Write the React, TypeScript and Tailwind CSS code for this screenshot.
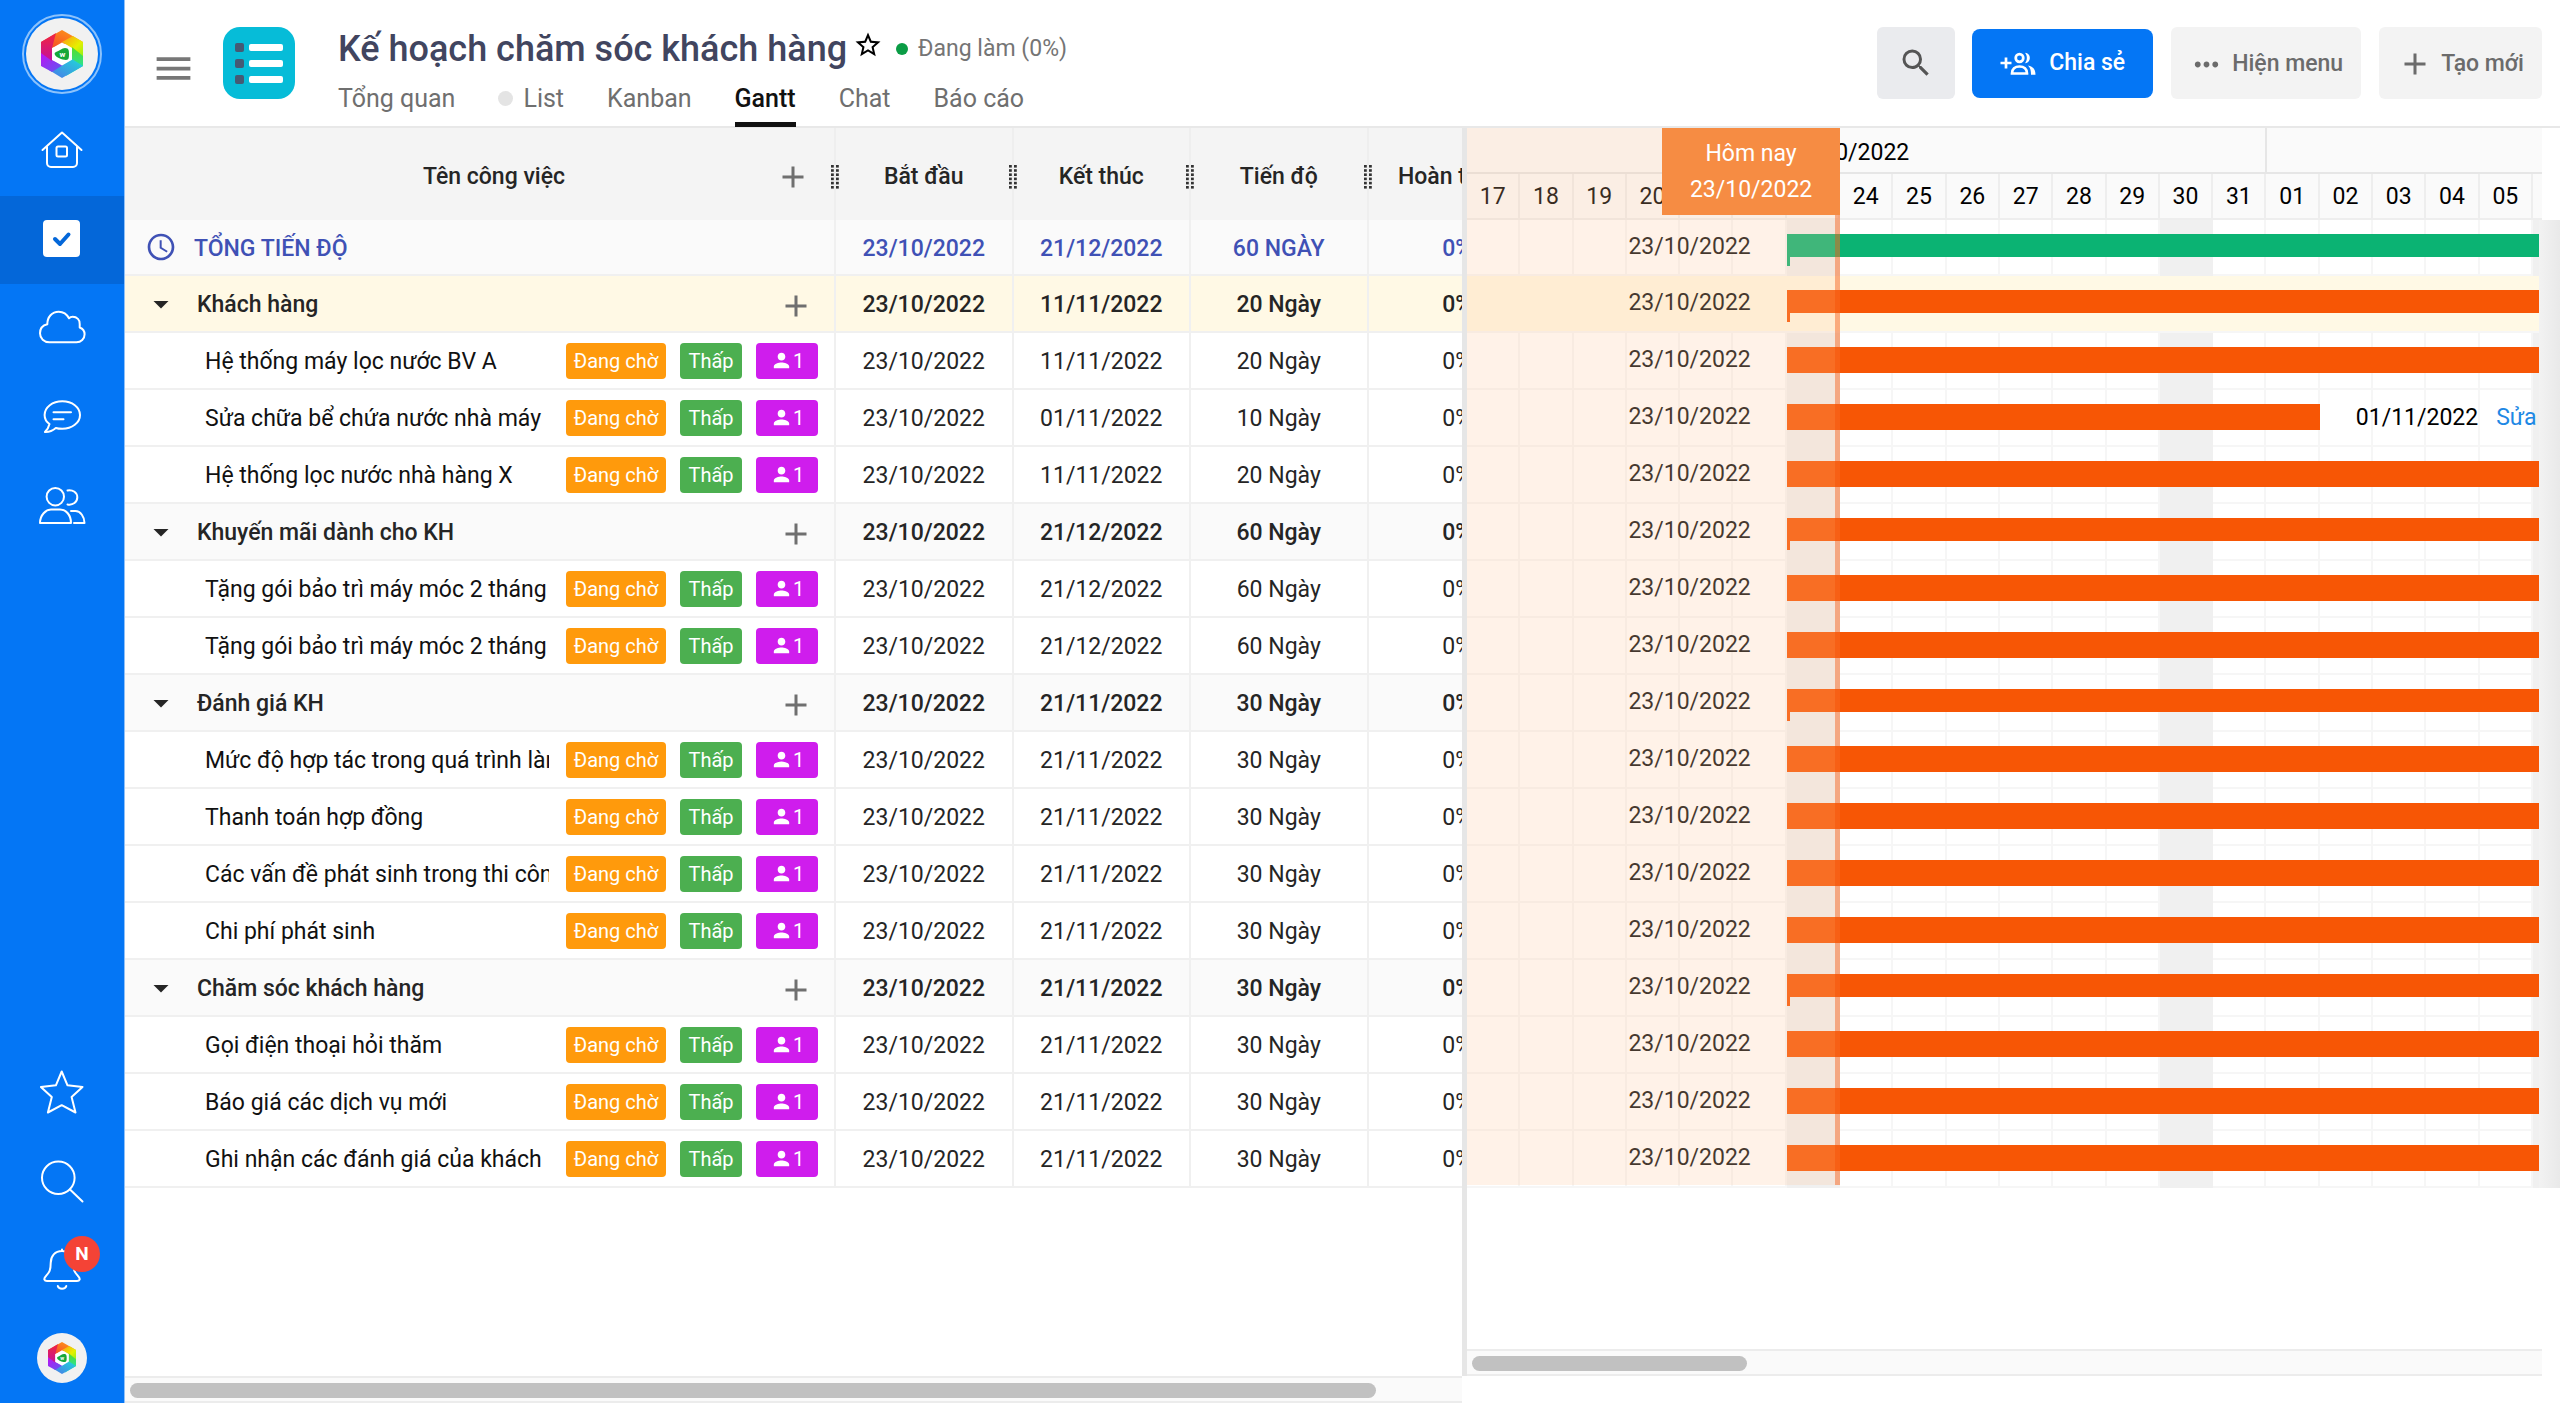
import type { ReactNode } from 'react';
import clsx from 'clsx';
import {
  MdAccessTime,
  MdAdd,
  MdArrowDropDown,
  MdMenu,
  MdMoreHoriz,
  MdPerson,
  MdSearch,
  MdStarBorder,
} from 'react-icons/md';

type RowKind = 'total' | 'group' | 'task';

interface Row {
  kind: RowKind;
  name: string;
  end: string;
  duration: string;
  active?: boolean;
  short?: boolean;
}

const START = '23/10/2022';

const rows: Row[] = [
  { kind: 'total', name: 'TỔNG TIẾN ĐỘ', end: '21/12/2022', duration: '60 NGÀY' },
  { kind: 'group', name: 'Khách hàng', end: '11/11/2022', duration: '20 Ngày', active: true },
  { kind: 'task', name: 'Hệ thống máy lọc nước BV A', end: '11/11/2022', duration: '20 Ngày' },
  { kind: 'task', name: 'Sửa chữa bể chứa nước nhà máy', end: '01/11/2022', duration: '10 Ngày', short: true },
  { kind: 'task', name: 'Hệ thống lọc nước nhà hàng X', end: '11/11/2022', duration: '20 Ngày' },
  { kind: 'group', name: 'Khuyến mãi dành cho KH', end: '21/12/2022', duration: '60 Ngày' },
  { kind: 'task', name: 'Tặng gói bảo trì máy móc 2 tháng', end: '21/12/2022', duration: '60 Ngày' },
  { kind: 'task', name: 'Tặng gói bảo trì máy móc 2 tháng', end: '21/12/2022', duration: '60 Ngày' },
  { kind: 'group', name: 'Đánh giá KH', end: '21/11/2022', duration: '30 Ngày' },
  { kind: 'task', name: 'Mức độ hợp tác trong quá trình làm việc', end: '21/11/2022', duration: '30 Ngày' },
  { kind: 'task', name: 'Thanh toán hợp đồng', end: '21/11/2022', duration: '30 Ngày' },
  { kind: 'task', name: 'Các vấn đề phát sinh trong thi công', end: '21/11/2022', duration: '30 Ngày' },
  { kind: 'task', name: 'Chi phí phát sinh', end: '21/11/2022', duration: '30 Ngày' },
  { kind: 'group', name: 'Chăm sóc khách hàng', end: '21/11/2022', duration: '30 Ngày' },
  { kind: 'task', name: 'Gọi điện thoại hỏi thăm', end: '21/11/2022', duration: '30 Ngày' },
  { kind: 'task', name: 'Báo giá các dịch vụ mới', end: '21/11/2022', duration: '30 Ngày' },
  { kind: 'task', name: 'Ghi nhận các đánh giá của khách', end: '21/11/2022', duration: '30 Ngày' },
];

const days = [
  '17', '18', '19', '20', '21', '22', '23', '24', '25', '26',
  '27', '28', '29', '30', '31', '01', '02', '03', '04', '05',
];

// Sundays, by column index (the last one is the column cut off at the right edge)
const sundays = [6, 13, 20];

const headerGrid = 'grid grid-cols-[repeat(20,minmax(0,1fr))_9px]';
const bodyGrid = 'grid grid-cols-[repeat(20,minmax(0,1fr))_6px_21px]';

/* ---------- Sidebar ---------- */

function Logo({ className }: { className: string }) {
  return (
    <svg viewBox="0 0 44 48" className={className} aria-hidden="true">
      <defs>
        <linearGradient id="seg-a" x1="0" y1="1" x2="1" y2="0">
          <stop offset="0" stopColor="#f4402c" />
          <stop offset="1" stopColor="#ffa114" />
        </linearGradient>
        <linearGradient id="seg-b" x1="0" y1="0" x2="1" y2="1">
          <stop offset="0" stopColor="#ff9a12" />
          <stop offset="0.6" stopColor="#e6f000" />
          <stop offset="1" stopColor="#8df01a" />
        </linearGradient>
        <linearGradient id="seg-c" x1="0" y1="0" x2="0" y2="1">
          <stop offset="0" stopColor="#58dc28" />
          <stop offset="1" stopColor="#14e6c8" />
        </linearGradient>
        <linearGradient id="seg-d" x1="1" y1="0" x2="0" y2="1">
          <stop offset="0" stopColor="#1fd8d8" />
          <stop offset="1" stopColor="#4a78ea" />
        </linearGradient>
        <linearGradient id="seg-e" x1="1" y1="1" x2="0" y2="0">
          <stop offset="0" stopColor="#5a5cf0" />
          <stop offset="1" stopColor="#c010f4" />
        </linearGradient>
        <linearGradient id="seg-f" x1="0" y1="1" x2="0" y2="0">
          <stop offset="0" stopColor="#c4109c" />
          <stop offset="1" stopColor="#f2263a" />
        </linearGradient>
      </defs>
      <path d="M1 12 22 0 43 12 22 14 12 18Z" fill="url(#seg-a)" />
      <path d="M22 12 33 6 43 12V27L32 18Z" fill="url(#seg-b)" />
      <path d="M32 17 43 26V36L26 46 32 30Z" fill="url(#seg-c)" />
      <path d="M43 36 22 48 9 40 22 35 32 29Z" fill="url(#seg-d)" />
      <path d="M23 35 12 42 1 36V22L12 30Z" fill="url(#seg-e)" />
      <path d="M12 31 1 23V12L16 3 12 18Z" fill="url(#seg-f)" />
      <path d="M22 12.500 32 18.300V29.700L22 35.500 12 29.700V18.300Z" fill="#fff" />
      <path d="M16 22c3-1 6-4 9-4 4 0 4 3 4 6s0 6-3 6c-4 0-10-3-11-5s0-2.500 1-3Z" fill="#17a83a" />
      <text x="22.500" y="27" textAnchor="middle" fontSize="8" fontWeight="700" fill="#fff">
        w
      </text>
    </svg>
  );
}

function LineIcon({ children }: { children: ReactNode }) {
  return (
    <svg
      viewBox="0 0 48 48"
      className="size-12"
      fill="none"
      stroke="currentColor"
      strokeWidth="2"
      strokeLinecap="round"
      strokeLinejoin="round"
      aria-hidden="true"
    >
      {children}
    </svg>
  );
}

function NavItem({ label, active, children }: { label: string; active?: boolean; children: ReactNode }) {
  return (
    <a
      href="#"
      aria-label={label}
      className={clsx('flex h-[88px] w-full items-center justify-center', active && 'bg-[#0467d9]')}
    >
      {children}
    </a>
  );
}

function Sidebar() {
  return (
    <nav className="flex w-[125px] shrink-0 flex-col border-r border-[#8fc0f8] bg-[#0476f5] text-white">
      <a href="#" aria-label="Logo" className="flex h-[108px] items-center justify-center">
        <span className="flex size-20 items-center justify-center rounded-full border-2 border-[#8cc2fb]">
          <span className="flex size-[72px] items-center justify-center rounded-full bg-[#f1f1f1]">
            <Logo className="h-12 w-11" />
          </span>
        </span>
      </a>
      <NavItem label="Trang chủ">
        <LineIcon>
          <path d="M4.500 22 24 4.500 43.500 22" />
          <path d="M9 19V35a4 4 0 0 0 4 4H35a4 4 0 0 0 4-4V19" />
          <rect x="18.500" y="18.500" width="10.500" height="10" rx="1.500" />
        </LineIcon>
      </NavItem>
      <NavItem label="Công việc" active>
        <LineIcon>
          <rect x="6" y="5" width="35" height="35" rx="3" fill="#fff" />
          <path d="M17 23 22 28 30.500 18.500" stroke="#0467d9" strokeWidth="4" />
        </LineIcon>
      </NavItem>
      <NavItem label="Tài liệu">
        <LineIcon>
          <path d="M11.500 38.300C6 38.300 2 34.500 2 29.300 2 24.500 5 21.300 9.300 20.300 9.300 13 14 7.700 20.700 7.700c4.600 0 8.300 2.600 10.300 6.600 1-1.100 2.300-1.500 3.700-1.500 4.300 0 7.300 3.200 7 7.200v3.500c3.100 1.200 4.900 3.700 4.900 6.800 0 4.700-3.600 8-8.100 8Z" />
        </LineIcon>
      </NavItem>
      <NavItem label="Trò chuyện">
        <LineIcon>
          <path d="M11.500 32C8.300 29.800 6.600 26.600 6.600 23 6.600 15.200 14.500 9.200 24.300 9.200S42 15.200 42 23 34 36.800 24.300 36.800c-2.300 0-4.500-.2-6.500-.8-2.800 2.500-6.800 4.200-10.900 4C9.300 37.800 10.800 35 11.500 32Z" />
          <path d="M15.500 20.300H33M15.500 27.300H25.500" />
        </LineIcon>
      </NavItem>
      <NavItem label="Thành viên">
        <LineIcon>
          <circle cx="17.300" cy="16.700" r="8.700" />
          <path d="M2 43C2 35 8 29.500 13 29.500h9C28 29.500 33 35 33 43Z" />
          <path d="M29.500 10.400C35 9.500 39.300 12.500 39.300 17.300S35 25.500 29.500 24.500" />
          <path d="M33 31h4.500c5 0 9 6 9 12H36" />
        </LineIcon>
      </NavItem>
      <div className="mt-auto flex flex-col">
        <NavItem label="Yêu thích">
          <LineIcon>
            <path d="M23.700 2.500 29.500 16.300 44.500 18 33.600 28 37.500 43.500 23.700 36.200 9.900 43.500 13.800 28 2.900 18 17.900 16.300Z" />
          </LineIcon>
        </NavItem>
        <NavItem label="Tìm kiếm">
          <LineIcon>
            <circle cx="20.300" cy="20.700" r="16.300" />
            <path d="M32 32.500 44.500 44.500" />
          </LineIcon>
        </NavItem>
        <NavItem label="Thông báo">
          <span className="relative">
            <LineIcon>
              <path d="M24 6C17 6 12.700 11 12.700 18c0 8-1.700 9.500-4.700 13-3 3-1.500 5 1 5h30c2.500 0 4-2 1-5-3-3.500-4.700-5-4.700-13C35.300 11 31 6 24 6ZM24 6V4.500" />
              <path d="M19.800 41c.9 3.500 7.600 3.500 8.500 0" />
            </LineIcon>
            <span className="absolute -top-[9px] left-[26px] flex size-9 items-center justify-center rounded-full bg-[#f44336] text-[19px] font-bold">
              N
            </span>
          </span>
        </NavItem>
        <a href="#" aria-label="Tài khoản" className="flex h-[90px] items-center justify-center">
          <span className="flex size-[50px] items-center justify-center rounded-full bg-[#f1f1f1]">
            <Logo className="h-8 w-[30px]" />
          </span>
        </a>
      </div>
    </nav>
  );
}

/* ---------- Header ---------- */

function ProjectIcon() {
  return (
    <svg viewBox="0 0 72 72" className="size-[72px] shrink-0" aria-hidden="true">
      <rect width="72" height="72" rx="17" fill="#06bcd8" />
      {[16, 32, 48].map((y) => (
        <g key={y}>
          <rect x="12" y={y} width="9" height="9" rx="2" fill="#455a74" />
          <rect x="26" y={y + 1} width="34" height="7" rx="2" fill="#fff" />
        </g>
      ))}
    </svg>
  );
}

function ShareIcon() {
  return (
    <svg
      viewBox="0 0 36 26"
      className="h-[26px] w-9"
      fill="none"
      stroke="currentColor"
      strokeWidth="2.700"
      aria-hidden="true"
    >
      <path d="M.5 12H11.500M6 6.500V17.500" />
      <circle cx="19.500" cy="7" r="3.800" />
      <path d="M12 22.500C12 18 15 15.500 19.500 15.500S27 18 27 22.500Z" />
      <path d="M25 1.800C31.500 1.800 31.500 12.200 25 12.200 27.500 9 27.500 5 25 1.800Z" fill="currentColor" stroke="none" />
      <path d="M28 14.500C33 15.500 35.500 18.500 35.500 23.800H31C31 19.500 30.500 17 28 14.500Z" fill="currentColor" stroke="none" />
    </svg>
  );
}

const tabs = ['Tổng quan', 'List', 'Kanban', 'Gantt', 'Chat', 'Báo cáo'];

function Header() {
  return (
    <header className="flex h-32 shrink-0 border-b-2 border-[#e8e8e8] bg-white pr-[18px] pl-[26px]">
      <button type="button" aria-label="Menu" className="mt-[46px] size-[45px] shrink-0 text-[#777]">
        <MdMenu className="size-full" />
      </button>
      <div className="mt-[27px] ml-[27px]">
        <ProjectIcon />
      </div>
      <div className="mt-[27px] ml-[43px]">
        <div className="flex h-11 items-center">
          <h1 className="text-[36px] font-medium text-[#41455f]">Kế hoạch chăm sóc khách hàng</h1>
          <button type="button" aria-label="Yêu thích" className="mb-2 ml-[6px] text-black">
            <MdStarBorder className="size-[30px]" />
          </button>
          <span className="ml-[13px] size-3 rounded-full bg-[#0a9c45]" />
          <span className="ml-[10px] text-[23px] text-[#757575]">Đang làm (0%)</span>
        </div>
        <div className="mt-3 flex h-11 gap-[43px] text-[25px] leading-8 text-[#6f6f6f]">
          {tabs.map((tab) => (
            <a
              key={tab}
              href="#"
              className={clsx(
                'flex gap-[10px]',
                tab === 'Gantt' && 'border-b-[5px] border-[#111] font-medium text-[#111]',
              )}
            >
              {tab === 'List' && <span className="mt-2 size-[15px] rounded-full bg-[#e4e4e4]" />}
              {tab}
            </a>
          ))}
        </div>
      </div>
      <div className="mt-[27px] ml-auto flex items-start text-[23px] font-medium text-[#6b6b6b]">
        <button
          type="button"
          aria-label="Tìm kiếm"
          className="flex h-[72px] w-[78px] items-center justify-center rounded-md bg-[#eaebee] text-[#555]"
        >
          <MdSearch className="size-9" />
        </button>
        <button
          type="button"
          className="mt-[2px] ml-[17px] flex h-[69px] items-center gap-[13px] rounded-lg bg-[#0476f5] px-[28px] text-white"
        >
          <ShareIcon />
          Chia sẻ
        </button>
        <button
          type="button"
          className="ml-[18px] flex h-[72px] items-center gap-2 rounded-md bg-[#f3f3f3] px-[18px] pt-[2px]"
        >
          <MdMoreHoriz className="size-[35px]" />
          Hiện menu
        </button>
        <button
          type="button"
          className="ml-[18px] flex h-[72px] items-center gap-2 rounded-md bg-[#f3f3f3] px-[18px] pt-[2px]"
        >
          <MdAdd className="size-9" />
          Tạo mới
        </button>
      </div>
    </header>
  );
}

/* ---------- Task table ---------- */

function DragHandle() {
  return (
    <svg
      viewBox="0 0 10 26"
      className="absolute top-9 -right-[6px] z-10 h-[26px] w-[10px]"
      fill="#333"
      aria-hidden="true"
    >
      {[1, 5.2, 9.400, 13.600, 17.800, 22].map((y) => (
        <g key={y}>
          <rect x="1" y={y} width="2.800" height="2.600" />
          <rect x="6" y={y} width="2.800" height="2.600" />
        </g>
      ))}
    </svg>
  );
}

function NameCell({ row }: { row: Row }) {
  if (row.kind === 'task') {
    return (
      <div className="flex items-center gap-[14px] pr-4 pl-20 text-[#111]">
        <span className="mt-[3px] mr-[3px] flex-1 overflow-hidden whitespace-nowrap">{row.name}</span>
        <span className="flex h-9 w-[100px] items-center justify-center rounded bg-[#ff9a0c] text-xl text-white">
          Đang chờ
        </span>
        <span className="flex h-9 w-[62px] items-center justify-center rounded bg-[#4caf50] text-xl text-white">
          Thấp
        </span>
        <span className="flex h-9 w-[62px] items-center justify-center rounded bg-[#cf1ded] text-xl text-white">
          <MdPerson className="mb-px size-[23px]" />1
        </span>
      </div>
    );
  }
  return (
    <div className="flex items-center gap-4 pr-5 pl-5">
      <span className="flex w-8 justify-center">
        {row.kind === 'total' ? (
          <MdAccessTime className="size-8 shrink-0" />
        ) : (
          <MdArrowDropDown className="size-9 shrink-0" />
        )}
      </span>
      <span className={clsx('mt-[3px] flex-1', row.kind === 'group' ? 'pl-1' : 'pl-px')}>{row.name}</span>
      {row.kind === 'group' && (
        <button type="button" aria-label="Thêm công việc" className="mt-1 text-[#6f6f6f]">
          <MdAdd className="size-9" />
        </button>
      )}
    </div>
  );
}

function TaskTable() {
  return (
    <div className="flex w-[1337px] shrink-0 flex-col overflow-hidden">
      <table className="w-[1421px] table-fixed border-separate border-spacing-0 text-center text-[23px] leading-8 text-[#252525]">
        <colgroup>
          <col className="w-[711px]" />
          <col />
          <col />
          <col />
          <col />
        </colgroup>
        <thead>
          <tr className="bg-[#f4f4f4]">
            <th className="relative h-[92px] border-r-2 border-[#eee] pt-[5px] font-medium">
              <div className="flex items-center pr-[23px] pl-[88px]">
                <span className="flex-1">Tên công việc</span>
                <button type="button" aria-label="Thêm cột" className="text-[#6f6f6f]">
                  <MdAdd className="size-9" />
                </button>
              </div>
              <DragHandle />
            </th>
            {['Bắt đầu', 'Kết thúc', 'Tiến độ'].map((title) => (
              <th key={title} className="relative border-r-2 border-[#eee] pt-[5px] font-medium">
                {title}
                <DragHandle />
              </th>
            ))}
            <th className="pt-[5px] font-medium">Hoàn thành</th>
          </tr>
        </thead>
        <tbody>
          {rows.map((row, index) => (
            <tr
              key={index}
              className={clsx(
                row.kind === 'total' && 'h-14 bg-[#fafafa] font-medium text-[#3f51b5]',
                row.kind === 'group' && 'h-[57px] font-medium',
                row.kind === 'group' && (row.active ? 'bg-[#fff9e5]' : 'bg-[#fafafa]'),
                row.kind === 'task' && 'h-[57px]',
              )}
            >
              <td className="border-r-2 border-b-2 border-[#f0f0f0] text-left">
                <NameCell row={row} />
              </td>
              <td className="border-r-2 border-b-2 border-[#f0f0f0] pt-[3px]">{START}</td>
              <td className="border-r-2 border-b-2 border-[#f0f0f0] pt-[3px]">{row.end}</td>
              <td className="border-r-2 border-b-2 border-[#f0f0f0] pt-[3px]">{row.duration}</td>
              <td className="border-b-2 border-[#f0f0f0] pt-[3px]">0%</td>
            </tr>
          ))}
        </tbody>
      </table>
      <div className="mt-auto h-[27px] border-y-2 border-[#ececec] bg-[#fafafa] pt-[5px] pl-[5px]">
        <div className="h-[15px] w-[1246px] rounded-full bg-[#c1c1c1]" />
      </div>
    </div>
  );
}

/* ---------- Timeline ---------- */

function TimelineRow({ row }: { row: Row }) {
  const isTask = row.kind === 'task';
  const color = row.kind === 'total' ? 'bg-[#0bb373]' : 'bg-[#f75605]';

  return (
    <div className={clsx('grid grid-cols-1 grid-rows-1', row.kind === 'total' ? 'h-14' : 'h-[57px]')}>
      <div className={clsx(bodyGrid, 'col-start-1 row-start-1')}>
        {Array.from({ length: 21 }, (_, i) => (
          <div
            key={i}
            className={clsx(
              row.active && 'border-b-2 border-[#f6f6f6] bg-[#fff9e5]',
              !row.active && sundays.includes(i) && 'bg-[#f0f0f0]',
              !row.active && !sundays.includes(i) && 'border-r-2 border-b-2 border-[#f6f6f6]',
            )}
          />
        ))}
        <div className="bg-gradient-to-r from-[#f2f2f2] to-[#e9e9e9]" />
      </div>
      <div className={clsx(bodyGrid, 'col-start-1 row-start-1')}>
        <div className="col-span-6 pt-[11px] pr-[36px] text-right">{START}</div>
        <div
          className={clsx(
            'mt-[14px] self-start',
            row.short ? 'col-span-10' : 'col-span-15',
            isTask ? 'h-[26px]' : 'h-[23px]',
            color,
          )}
        >
          {!isTask && <div className={clsx('h-8 w-[3px]', color)} />}
        </div>
        {row.short && (
          <div className="col-span-5 flex gap-[18px] overflow-hidden pt-3 pl-[36px] whitespace-nowrap text-black">
            {row.end}
            <a href="#" className="text-[#1e88e5]">
              {row.name}
            </a>
          </div>
        )}
      </div>
    </div>
  );
}

function Timeline() {
  return (
    <div className="relative flex min-w-0 flex-1 flex-col text-[23px] leading-8 text-[#111]">
      <div className="h-[92px] pr-[18px] text-center text-black">
        <div className={clsx(headerGrid, 'h-[46px] bg-[#fafafa] leading-[39px]')}>
          <div className="col-span-15 border-r-2 border-b-2 border-[#e6e6e6] pt-[5px]">10/2022</div>
          <div className="col-span-6 border-b-2 border-[#e6e6e6]" />
        </div>
        <div className={clsx(headerGrid, 'h-[46px] bg-[#fafafa] leading-[42px]')}>
          {days.map((day) => (
            <div key={day} className="border-r-2 border-b-2 border-[#eee] pt-[2px]">
              {day}
            </div>
          ))}
          <div className="border-b-2 border-[#eee]" />
        </div>
      </div>
      {rows.map((row, index) => (
        <TimelineRow key={index} row={row} />
      ))}
      <div className="mt-auto mr-[18px] h-[27px] border-y-2 border-[#ececec] bg-[#fafafa] pt-[5px] pl-[5px]">
        <div className="h-[15px] w-[275px] rounded-full bg-[#c1c1c1]" />
      </div>

      {/* Elapsed days up to today */}
      <div className={clsx(bodyGrid, 'pointer-events-none absolute inset-x-0 top-0 h-[1057px]')}>
        <div className="col-span-7 col-start-1 row-start-1 flex">
          <div className="flex-1 bg-[rgba(255,195,148,0.22)]" />
          <div className="w-[5px] bg-[rgba(248,106,35,0.54)]" />
        </div>
        <div className="col-span-7 col-start-1 row-start-1 ml-auto h-[87px] w-[178px] bg-[#f68c43] pt-2 text-center leading-9 text-white">
          Hôm nay
          <br />
          {START}
        </div>
      </div>
    </div>
  );
}

export default function App() {
  return (
    <div className="flex h-screen min-h-[1300px] overflow-hidden bg-white font-[Roboto,'Noto_Sans',sans-serif]">
      <Sidebar />
      <div className="flex min-w-0 flex-1 flex-col">
        <Header />
        <main className="flex min-h-0 flex-1">
          <TaskTable />
          <div className="mb-[27px] flex min-w-0 flex-1">
            <div className="w-[5px] shrink-0 bg-[#e6e6e6]" />
            <Timeline />
          </div>
        </main>
      </div>
    </div>
  );
}
